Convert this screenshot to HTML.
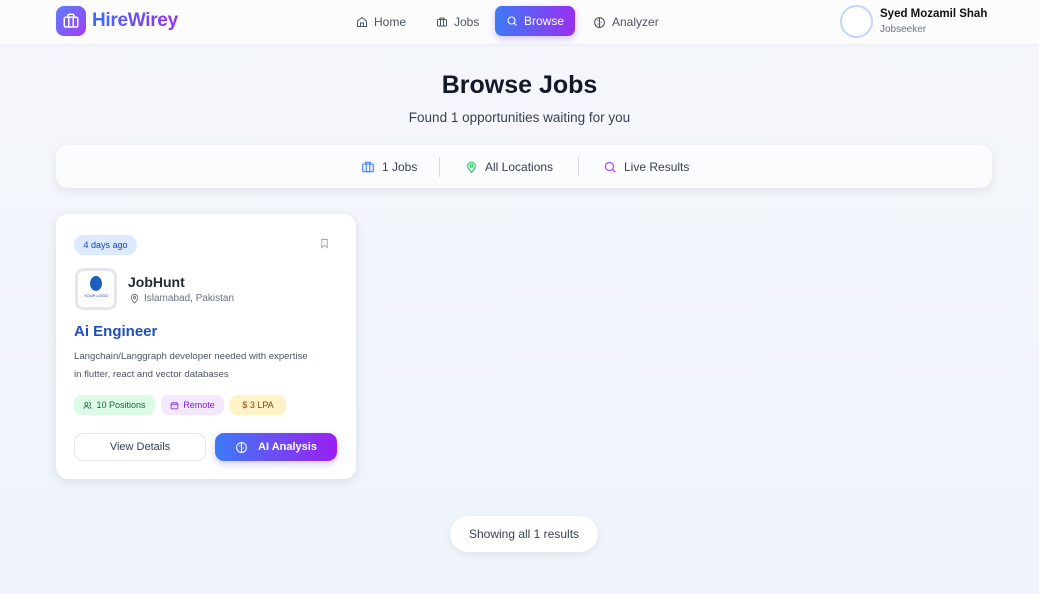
<!DOCTYPE html>
<html><head><meta charset="utf-8"><style>
*{box-sizing:border-box;margin:0;padding:0}
body{width:1039px;height:594px;overflow:hidden;font-family:"Liberation Sans",sans-serif;background:linear-gradient(180deg,#f5f7fb 0%,#eef3fc 100%);color:#1f2937;position:relative}
.nav{position:absolute;top:0;left:0;width:1039px;height:44px;background:#fcfcfd;box-shadow:0 1px 3px rgba(0,0,0,.05)}
.logo{position:absolute;left:56px;top:6px;width:30px;height:30px;border-radius:8px;background:linear-gradient(135deg,#5b7cfa,#a23ef5);display:flex;align-items:center;justify-content:center}
.brand{position:absolute;left:92px;top:10px;font-size:19px;font-weight:bold;letter-spacing:-.3px;background:linear-gradient(90deg,#3b6cf6,#9a2ff0);-webkit-background-clip:text;color:transparent}
.ni{position:absolute;top:15px;font-size:12px;color:#4b5563;display:flex;align-items:center;gap:6px;white-space:nowrap}
.browse{position:absolute;left:495px;top:6px;width:80px;height:30px;border-radius:7px;background:linear-gradient(90deg,#3d7af6,#9a2ff0);color:#fff;font-size:12px;display:flex;align-items:center;justify-content:center;gap:6px;box-shadow:0 3px 8px rgba(110,80,240,.3)}
.av{position:absolute;left:840px;top:5px;width:33px;height:33px;border-radius:50%;border:2px solid #bfd6fb;background:#fff}
h1{position:absolute;top:71px;width:100%;text-align:center;font-size:25px;color:#111827}
.sub{position:absolute;top:110px;width:100%;text-align:center;font-size:13.5px;color:#374151}
.bar{position:absolute;left:56px;top:145px;width:936px;height:43px;background:#fbfcfe;border-radius:12px;box-shadow:0 3px 10px rgba(0,0,0,.08)}
.bi{position:absolute;top:15px;font-size:12px;color:#374151;display:flex;align-items:center;gap:7px;white-space:nowrap}
.sep{position:absolute;top:12px;width:1px;height:20px;background:#d8dce2}
.card{position:absolute;left:56px;top:214px;width:300px;height:265px;background:#fff;border-radius:12px;box-shadow:0 2px 10px rgba(0,0,0,.1)}
.tag{position:absolute;font-size:9px;border-radius:7px;height:20px;display:flex;align-items:center;justify-content:center;gap:4px;white-space:nowrap}
.btn{position:absolute;top:219px;height:28px;border-radius:9px;font-size:11px;display:flex;align-items:center;justify-content:center;gap:10px}
.foot{position:absolute;left:450px;top:516px;width:148px;height:36px;background:#fff;border-radius:18px;box-shadow:0 2px 8px rgba(0,0,0,.08);font-size:12px;display:flex;align-items:center;justify-content:center;color:#374151}
</style></head><body>
<div class="nav">
<div class="logo"><svg width="18" height="18" viewBox="0 0 24 24" fill="none" stroke="#fff" stroke-width="2"><rect x="3" y="7" width="18" height="13" rx="2"/><path d="M8 7V5a2 2 0 0 1 2-2h4a2 2 0 0 1 2 2v2M9 7v13M15 7v13"/></svg></div>
<div class="brand">HireWirey</div>
<div class="ni" style="left:356px"><svg width="12" height="12" viewBox="0 0 24 24" fill="none" stroke="#4b5563" stroke-width="2"><path d="M3 10l9-7 9 7v11H3z"/><path d="M9 21v-7h6v7"/></svg>Home</div>
<div class="ni" style="left:436px"><svg width="12" height="12" viewBox="0 0 24 24" fill="none" stroke="#4b5563" stroke-width="2"><rect x="3" y="7" width="18" height="13" rx="2"/><path d="M8 7V4h8v3M9 7v13M15 7v13"/></svg>Jobs</div>
<div class="browse"><svg width="12" height="12" viewBox="0 0 24 24" fill="none" stroke="#fff" stroke-width="2.2"><circle cx="11" cy="11" r="7"/><path d="M21 21l-5-5"/></svg>Browse</div>
<div class="ni" style="left:593px"><svg width="13" height="13" viewBox="0 0 24 24" fill="none" stroke="#4b5563" stroke-width="2"><circle cx="12" cy="12" r="9"/><path d="M12 3v18M8 8h2M14 12h2M8 15h2"/></svg>Analyzer</div>
<div class="av"></div>
<div style="position:absolute;left:880px;top:8px;font-size:11.5px;font-weight:bold;color:#111">Syed Mozamil Shah</div>
<div style="position:absolute;left:880px;top:24px;font-size:10px;color:#6b7280">Jobseeker</div>
</div>
<h1>Browse Jobs</h1>
<div class="sub">Found 1 opportunities waiting for you</div>
<div class="bar">
<div class="bi" style="left:305px"><svg width="14" height="14" viewBox="0 0 24 24" fill="none" stroke="#3b82f6" stroke-width="2"><rect x="3" y="7" width="18" height="13" rx="2"/><path d="M8 7V4h8v3M9 7v13M15 7v13"/></svg>1 Jobs</div>
<div class="sep" style="left:383px"></div>
<div class="bi" style="left:409px"><svg width="13" height="14" viewBox="0 0 24 24" fill="none" stroke="#22c55e" stroke-width="2"><path d="M12 22s7-7 7-12a7 7 0 0 0-14 0c0 5 7 12 7 12z"/><circle cx="12" cy="10" r="2.5"/></svg>All Locations</div>
<div class="sep" style="left:522px"></div>
<div class="bi" style="left:547px"><svg width="14" height="14" viewBox="0 0 24 24" fill="none" stroke="#a855f7" stroke-width="2.2"><circle cx="11" cy="11" r="7"/><path d="M21 21l-5-5"/></svg>Live Results</div>
</div>
<div class="card">
<div class="tag" style="left:18px;top:21px;width:63px;background:#dbeafe;color:#1e40af;border-radius:10px">4 days ago</div>
<svg style="position:absolute;left:263px;top:23px" width="11" height="13" viewBox="0 0 24 24" fill="none" stroke="#9ca3af" stroke-width="2"><path d="M6 3h12v18l-6-5-6 5z"/></svg>
<div style="position:absolute;left:19px;top:54px;width:42px;height:42px;border-radius:8px;background:#e5e7eb;padding:3px"><div style="width:100%;height:100%;background:#fff;border-radius:6px;position:relative"><div style="position:absolute;left:12px;top:5px;width:12px;height:15px;border-radius:50%;background:#1d5fbf"></div><div style="position:absolute;left:0;width:100%;top:22px;font-size:4px;text-align:center;color:#1e3a8a">YOUR LOGO</div></div></div>
<div style="position:absolute;left:72px;top:60px;font-size:14px;font-weight:bold;color:#1f2937">JobHunt</div>
<div style="position:absolute;left:73px;top:79px;font-size:10px;color:#6b7280;display:flex;align-items:center;gap:4px"><svg width="11" height="11" viewBox="0 0 24 24" fill="none" stroke="#6b7280" stroke-width="2"><path d="M12 22s7-7 7-12a7 7 0 0 0-14 0c0 5 7 12 7 12z"/><circle cx="12" cy="10" r="2.5"/></svg>Islamabad, Pakistan</div>
<div style="position:absolute;left:18px;top:109px;font-size:15px;font-weight:bold;color:#1e4fb8">Ai Engineer</div>
<div style="position:absolute;left:18px;top:134px;width:275px;font-size:9.6px;line-height:18px;color:#4b5563">Langchain/Langgraph developer needed with expertise<br>in flutter, react and vector databases</div>
<div class="tag" style="left:18px;top:181px;background:#dcfce7;color:#166534;width:81px"><svg width="9" height="9" viewBox="0 0 24 24" fill="none" stroke="#166534" stroke-width="2"><circle cx="9" cy="8" r="4"/><path d="M2 21c0-4 3-6 7-6s7 2 7 6M16 4a4 4 0 0 1 0 8M22 21c0-3-2-5-4-6"/></svg>10 Positions</div>
<div class="tag" style="left:105px;top:181px;background:#f3e8ff;color:#7e22ce;width:63px"><svg width="9" height="9" viewBox="0 0 24 24" fill="none" stroke="#7e22ce" stroke-width="2"><rect x="3" y="5" width="18" height="16" rx="2"/><path d="M3 10h18M8 3v4M16 3v4"/></svg>Remote</div>
<div class="tag" style="left:174px;top:181px;background:#fef3c7;color:#92400e;width:56px">$ 3 LPA</div>
<div class="btn" style="left:18px;width:132px;border:1.5px solid #e5e7eb;color:#374151;background:#fff">View Details</div>
<div class="btn" style="left:159px;width:122px;background:linear-gradient(90deg,#3d7af6,#9a1ff2);color:#fff;font-weight:bold;box-shadow:0 3px 8px rgba(110,80,240,.3)"><svg width="13" height="13" viewBox="0 0 24 24" fill="none" stroke="#fff" stroke-width="2"><circle cx="12" cy="12" r="9"/><path d="M12 3v18M8 9h2M14 13h2"/></svg>AI Analysis</div>
</div>
<div class="foot">Showing all 1 results</div>
</body></html>
